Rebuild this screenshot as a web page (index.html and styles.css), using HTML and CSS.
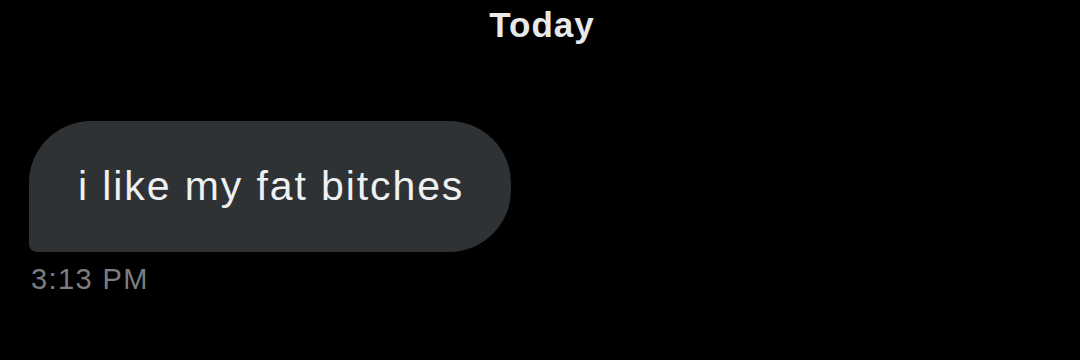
FILE: index.html
```html
<!DOCTYPE html>
<html>
<head>
<meta charset="utf-8">
<link rel="stylesheet" href="styles.css">
</head>
<body>
<div class="chat">
  <div class="day">Today</div>
  <div class="msg">
    <div class="bubble">i like my fat bitches</div>
    <div class="time">3:13 PM</div>
  </div>
</div>
</body>
</html>
```
FILE: styles.css
```css
html, body {
  margin: 0;
  padding: 0;
  background: #000;
  width: 1080px;
  height: 360px;
  overflow: hidden;
  font-family: "Liberation Sans", Arial, sans-serif;
}
.chat {
  display: flex;
  flex-direction: column;
}
.day {
  text-align: center;
  color: #e7e9ea;
  font-weight: bold;
  font-size: 35px;
  line-height: 40px;
  letter-spacing: 1px;
  padding-top: 5px;
  padding-left: 4px;
}
.msg {
  display: flex;
  flex-direction: column;
  align-items: flex-start;
  padding-left: 29px;
  margin-top: 76px;
}
.bubble {
  background: #2f3235;
  color: #eef0f1;
  font-size: 41px;
  line-height: 46px;
  letter-spacing: 1.9px;
  padding: 42px 47px 43px 49px;
  border-radius: 62px 62px 62px 8px;
}
.time {
  color: #7a7e82;
  font-size: 29px;
  line-height: 34px;
  letter-spacing: 1.4px;
  margin-top: 10px;
  padding-left: 2px;
}
```
